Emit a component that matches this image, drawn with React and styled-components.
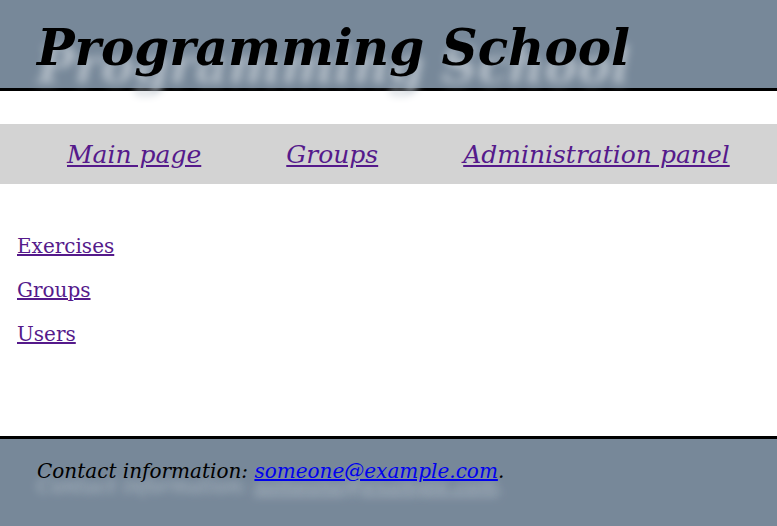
import React from 'react'
import styled, {createGlobalStyle} from 'styled-components'

const Global = createGlobalStyle`
  html, body {
    margin: 0;
    padding: 0;
    background: #fff;
    font-family: "DejaVu Serif", serif;
  }
  a { color: #551a8b; }
`

const Page = styled.div`
  display: flex;
  flex-direction: column;
  min-height: 526px;
`

const Header = styled.header`
  background: #778899;
  height: 88px;
  border-bottom: 3px solid #000;
  padding: 6px 0 0 37px;
  box-sizing: content-box;
  height: 82px;
  display: flex;
  align-items: center;
`

const Title = styled.h1`
  margin: 0;
  font-size: 50px;
  font-style: italic;
  font-weight: bold;
  text-shadow: 0 18px 9px #b4bec8;
`

const Nav = styled.nav`
  margin-top: 33px;
  background: #d3d3d3;
  height: 60px;
  display: flex;
  align-items: center;
  padding-left: 67px;
  gap: 85px;
`

const NavLink = styled.a`
  font-size: 25px;
  font-style: italic;
`

const Content = styled.main`
  flex: 1;
  padding: 50px 17px 0;
`

const Item = styled.p`
  margin: 0 0 20px;
  font-size: 20px;
`

const Footer = styled.footer`
  border-top: 3px solid #000;
  background: #778899;
  height: 90px;
  padding: 20px 37px 0;
  box-sizing: border-box;
  font-size: 20px;
  font-style: italic;
  text-shadow: 0 15px 9px #b4bec8;
`

const Mail = styled.a`
  color: #0000ee;
`

export default function App() {
  return (
    <Page>
      <Global />
      <Header>
        <Title>Programming School</Title>
      </Header>
      <Nav>
        <NavLink href="#">Main page</NavLink>
        <NavLink href="#">Groups</NavLink>
        <NavLink href="#">Administration panel</NavLink>
      </Nav>
      <Content>
        <Item><a href="#">Exercises</a></Item>
        <Item><a href="#">Groups</a></Item>
        <Item><a href="#">Users</a></Item>
      </Content>
      <Footer>
        Contact information: <Mail href="mailto:someone@example.com">someone@example.com</Mail>.
      </Footer>
    </Page>
  )
}
